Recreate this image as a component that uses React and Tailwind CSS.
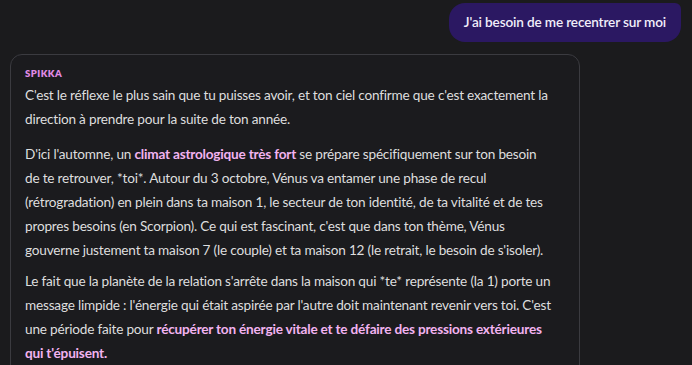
import React from 'react';

const font = { fontFamily: 'Lato, "Noto Sans", sans-serif' };

const Hl = ({ children }) => (
  <strong className="font-bold text-[#f2b3f0]">{children}</strong>
);

const App = () => {
  return (
    <div className="w-[692px] h-[365px] overflow-hidden bg-[#1b1b1d] text-[#dedede]" style={font}>
      <div className="flex justify-end pt-[3px] pr-[11px]">
        <div className="h-[39px] px-[15px] flex items-center rounded-2xl rounded-tr-md bg-[#2b1862] text-[#f1eefa] text-[13.6px] tracking-[-0.15px] font-semibold">
          J'ai besoin de me recentrer sur moi
        </div>
      </div>

      <div className="ml-[10px] mt-[12px] w-[570px] h-[400px] rounded-xl border border-[#3b3b40] bg-[#1b1b1e] px-[14px] pt-[13px]">
        <div className="text-[9.5px] leading-[12px] font-extrabold tracking-wider text-[#e08ae6] mb-[3px]">
          SPIKKA
        </div>

        <div className="text-[13.6px] tracking-[-0.2px] leading-[24px] whitespace-nowrap">
          <p className="mb-[11px]">
            C'est le réflexe le plus sain que tu puisses avoir, et ton ciel confirme que c'est exactement la<br />
            direction à prendre pour la suite de ton année.
          </p>
          <p className="mb-[7px]">
            D'ici l'automne, un <Hl>climat astrologique très fort</Hl> se prépare spécifiquement sur ton besoin<br />
            de te retrouver, *toi*. Autour du 3 octobre, Vénus va entamer une phase de recul<br />
            (rétrogradation) en plein dans ta maison 1, le secteur de ton identité, de ta vitalité et de tes<br />
            propres besoins (en Scorpion). Ce qui est fascinant, c'est que dans ton thème, Vénus<br />
            gouverne justement ta maison 7 (le couple) et ta maison 12 (le retrait, le besoin de s'isoler).
          </p>
          <p>
            Le fait que la planète de la relation s'arrête dans la maison qui *te* représente (la 1) porte un<br />
            message limpide : l'énergie qui était aspirée par l'autre doit maintenant revenir vers toi. C'est<br />
            une période faite pour <Hl>récupérer ton énergie vitale et te défaire des pressions extérieures</Hl><br />
            <Hl>qui t'épuisent.</Hl>
          </p>
        </div>
      </div>
    </div>
  );
};

export default App;
